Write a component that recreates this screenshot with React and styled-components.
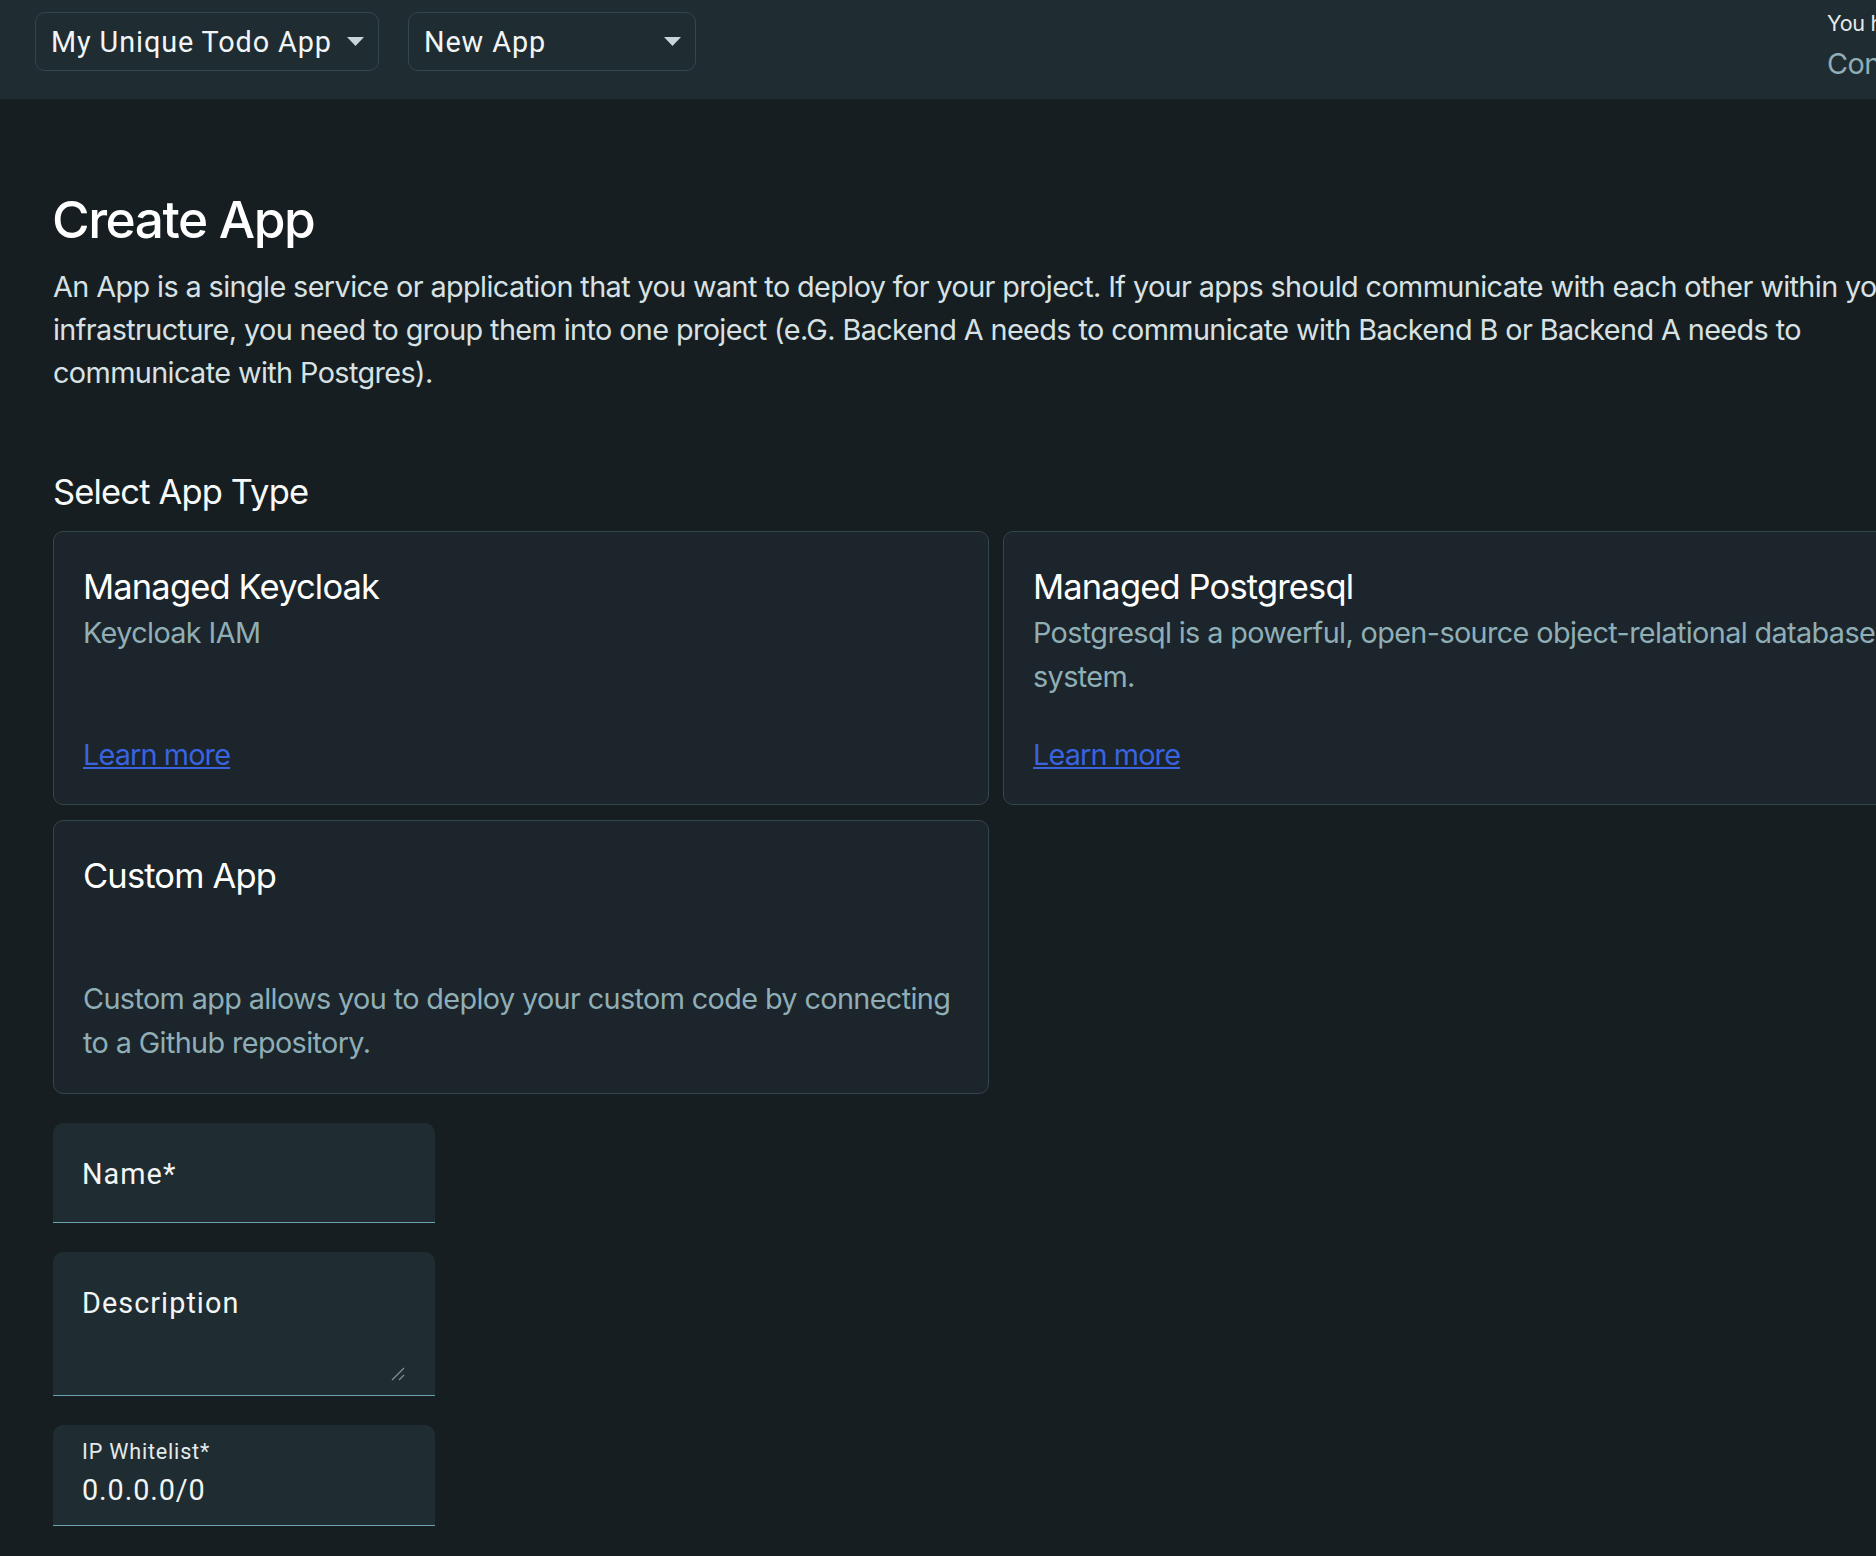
import React from "react";
import styled, { createGlobalStyle } from "styled-components";

const Global = createGlobalStyle`
  html, body { margin: 0; padding: 0; background: #161e21; }
  body { overflow: hidden; font-family: Inter, "Liberation Sans", sans-serif; }
  * { box-sizing: border-box; }
`;

const Page = styled.div`
  width: 1876px;
  height: 1556px;
  overflow: hidden;
  background: #161e21;
  display: flex;
  flex-direction: column;
`;

const TopBar = styled.header`
  flex: none;
  height: 99px;
  background: #1f2c31;
  padding-left: 35px;
  display: flex;
  align-items: flex-start;
  gap: 29px;
`;

const Picker = styled.div`
  width: ${(p) => p.$width}px;
  height: 59px;
  margin-top: 12px;
  border: 1.5px solid #33464c;
  border-radius: 10px;
  padding: 0 14px 0 15px;
  display: flex;
  align-items: center;
  justify-content: space-between;
  font-family: Roboto, sans-serif;
  font-size: 28.8px;
  letter-spacing: 0.9px;
  color: #f2f5f6;
  white-space: nowrap;
`;

const Caret = styled.svg`
  width: 17px;
  height: 9px;
  flex: none;
  fill: #c9d5d9;
`;

const Account = styled.div`
  margin-left: auto;
  margin-top: 10px;
  width: 49px;
  overflow: hidden;
  white-space: nowrap;
`;

const AccountNote = styled.div`
  font-size: 21.6px;
  line-height: 26px;
  color: #e4eaec;
  letter-spacing: -0.3px;
`;

const AccountLink = styled.div`
  margin-top: 10px;
  font-size: 28.8px;
  line-height: 36px;
  color: #90aeb6;
  letter-spacing: -0.5px;
`;

const Main = styled.main`
  padding: 88px 0 0 53px;
  width: 1938px;
`;

const Title = styled.h1`
  margin: 0 0 0 -1px;
  font-size: 51.4px;
  line-height: 64px;
  font-weight: 500;
  letter-spacing: -1.5px;
  color: #ffffff;
`;

const Lead = styled.p`
  margin: 14px 0 0;
  font-size: 28.8px;
  line-height: 43px;
  letter-spacing: -0.6px;
  color: #d8e2e4;
`;

const SectionTitle = styled.h2`
  margin: 74px 0 0;
  font-size: 34.5px;
  line-height: 48px;
  font-weight: 420;
  letter-spacing: -0.85px;
  color: #f8fafa;
`;

const CardGrid = styled.div`
  margin-top: 15px;
  display: grid;
  grid-template-columns: 936px 936px;
  grid-auto-rows: 274px;
  column-gap: 14px;
  row-gap: 15px;
`;

const Card = styled.div`
  background: #1b252b;
  border: 1.5px solid #33464c;
  border-radius: 10px;
  padding: 31px 29px 0;
  display: flex;
  flex-direction: column;
`;

const CardTitle = styled.h3`
  margin: 0;
  font-size: 34.5px;
  line-height: 48px;
  font-weight: 420;
  letter-spacing: -0.85px;
  color: #ffffff;
`;

const CardText = styled.p`
  margin: ${(p) => (p.$pushed ? "auto 0 29px" : "0")};
  font-size: 28.8px;
  line-height: 43.5px;
  letter-spacing: -0.62px;
  color: #90aeb6;
`;

const LearnMore = styled.a`
  margin-top: auto;
  margin-bottom: 28px;
  font-size: 28.8px;
  line-height: 43px;
  letter-spacing: -0.85px;
  color: #3a63e0;
  text-decoration: underline;
  align-self: flex-start;
`;

const Fields = styled.div`
  margin-top: 29px;
  width: 382px;
  display: flex;
  flex-direction: column;
  gap: 29px;
`;

const Field = styled.div`
  height: ${(p) => p.$height}px;
  background: #1f2c31;
  border-bottom: 1.5px solid #6ba3b3;
  border-radius: 10px 10px 0 0;
  padding: ${(p) => (p.$filled ? "14px 29px 0" : "34px 29px 0")};
  font-family: Roboto, sans-serif;
  color: #f2f5f6;
  position: relative;
`;

const FieldLabel = styled.div`
  font-size: ${(p) => (p.$small ? "21.6px" : "28.8px")};
  line-height: ${(p) => (p.$small ? "26px" : "34px")};
  letter-spacing: ${(p) => (p.$small ? "0.8px" : "1.05px")};
  color: ${(p) => (p.$small ? "#e4eaec" : "#f2f5f6")};
`;

const FieldValue = styled.div`
  margin-top: 8px;
  font-size: 28.8px;
  line-height: 34px;
  letter-spacing: 0.9px;
`;

const Grip = styled.svg`
  position: absolute;
  right: 30px;
  bottom: 14px;
  width: 14px;
  height: 14px;
`;

function DownCaret() {
  return (
    <Caret viewBox="0 0 17 9">
      <path d="M0 0h17l-8.5 9z" />
    </Caret>
  );
}

export default function App() {
  return (
    <Page>
      <Global />
      <TopBar>
        <Picker $width={344}>
          My Unique Todo App
          <DownCaret />
        </Picker>
        <Picker $width={288}>
          New App
          <DownCaret />
        </Picker>
        <Account>
          <AccountNote>You have</AccountNote>
          <AccountLink>Contact</AccountLink>
        </Account>
      </TopBar>
      <Main>
        <Title>Create App</Title>
        <Lead>
          An App is a single service or application that you want to deploy for your project. If your apps should
          communicate with each other within your infrastructure, you need to group them into one project (e.G. Backend
          A needs to communicate with Backend B or Backend A needs to communicate with Postgres).
        </Lead>
        <SectionTitle>Select App Type</SectionTitle>
        <CardGrid>
          <Card>
            <CardTitle>Managed Keycloak</CardTitle>
            <CardText>Keycloak IAM</CardText>
            <LearnMore href="#">Learn more</LearnMore>
          </Card>
          <Card>
            <CardTitle>Managed Postgresql</CardTitle>
            <CardText>Postgresql is a powerful, open-source object-relational database system.</CardText>
            <LearnMore href="#">Learn more</LearnMore>
          </Card>
          <Card>
            <CardTitle>Custom App</CardTitle>
            <CardText $pushed>
              Custom app allows you to deploy your custom code by connecting to a Github repository.
            </CardText>
          </Card>
        </CardGrid>
        <Fields>
          <Field $height={100}>
            <FieldLabel>Name*</FieldLabel>
          </Field>
          <Field $height={144}>
            <FieldLabel>Description</FieldLabel>
            <Grip viewBox="0 0 14 14">
              <path d="M1 13L13 1M8 13l5-5" stroke="#8b8f91" strokeWidth="1.2" fill="none" />
            </Grip>
          </Field>
          <Field $height={101} $filled>
            <FieldLabel $small>IP Whitelist*</FieldLabel>
            <FieldValue>0.0.0.0/0</FieldValue>
          </Field>
        </Fields>
      </Main>
    </Page>
  );
}
